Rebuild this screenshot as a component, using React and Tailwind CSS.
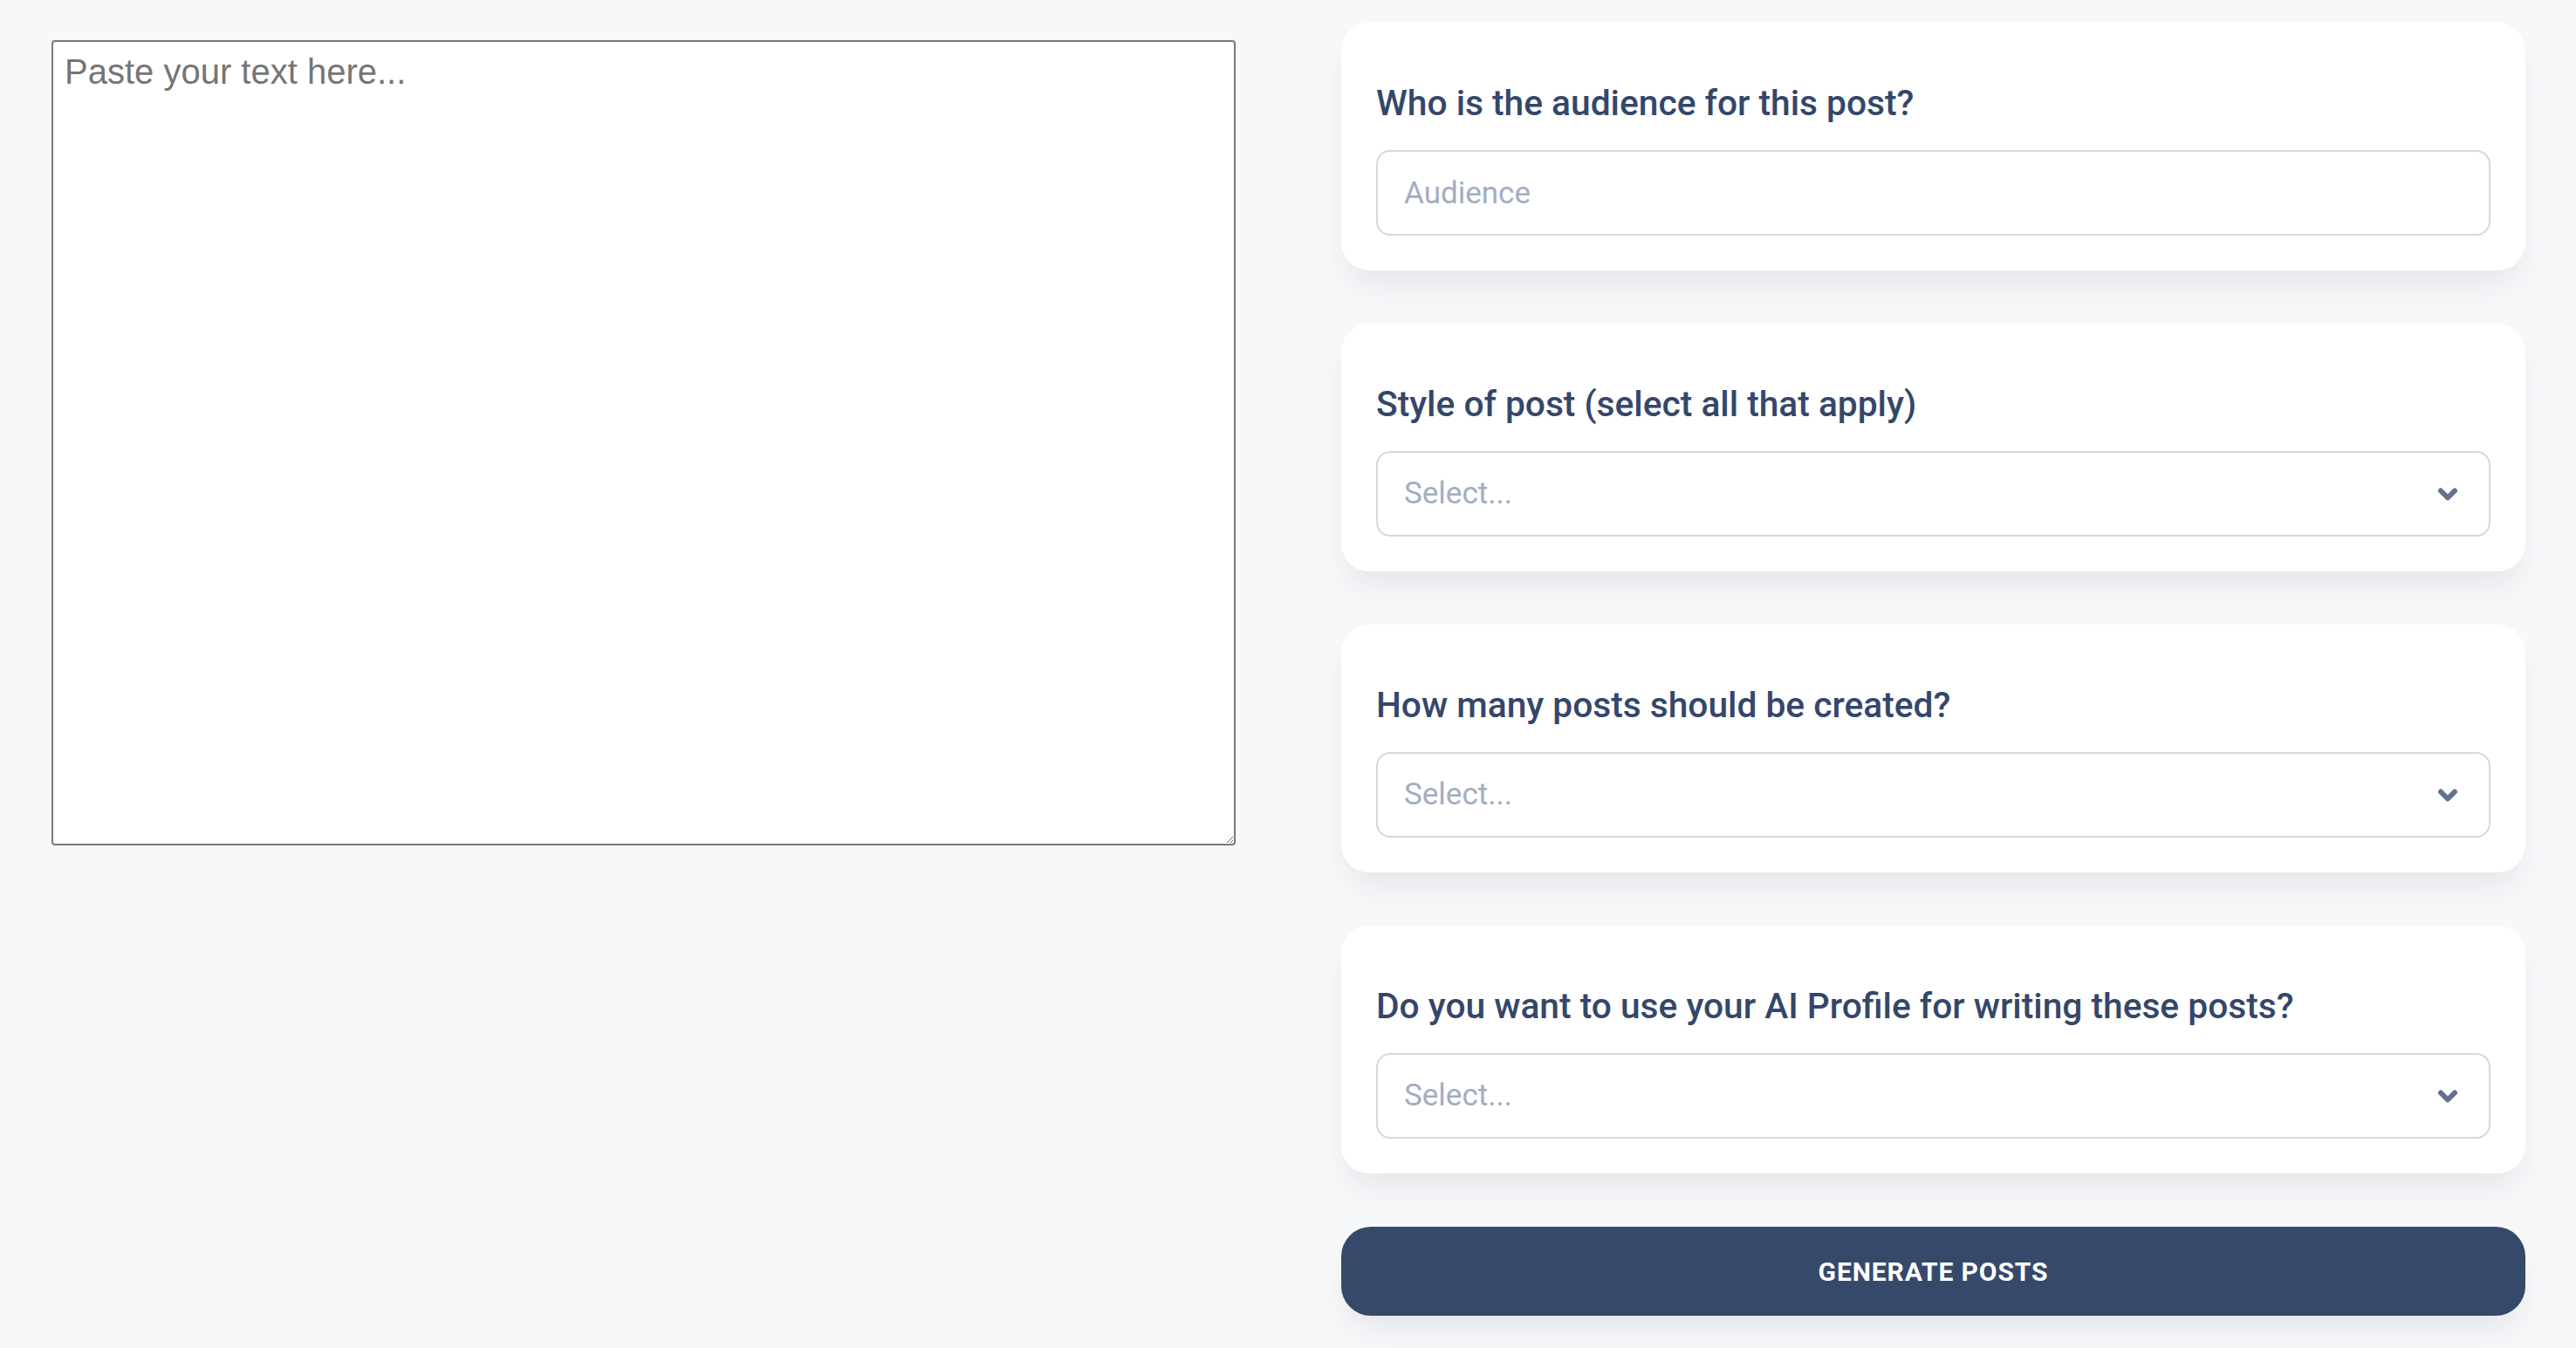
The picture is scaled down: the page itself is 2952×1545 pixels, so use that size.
const questions = [
  { label: "Who is the audience for this post?", kind: "text", placeholder: "Audience" },
  { label: "Style of post (select all that apply)", kind: "select" },
  { label: "How many posts should be created?", kind: "select" },
  { label: "Do you want to use your AI Profile for writing these posts?", kind: "select" },
];

const Chevron = () => (
  <svg width="24" height="17" viewBox="0 0 24 17" fill="none">
    <path
      d="M4 4.5 L12 12.5 L20 4.5"
      stroke="#64718c"
      strokeWidth="6"
      strokeLinecap="round"
      strokeLinejoin="round"
    />
  </svg>
);

const QuestionCard = ({ label, kind, placeholder }) => {
  return (
    <div className="rounded-[32px] bg-white px-[40px] pb-[40px] pt-[62px] shadow-[0_22px_34px_-8px_rgba(30,41,59,0.09)]">
      <h3 className="mb-[24px] text-[40.7px] font-medium leading-[60px] text-[#34476a]">
        {label}
      </h3>
      {kind === "text" ? (
        <input
          type="text"
          placeholder={placeholder}
          className="h-[98px] w-full rounded-[16px] border-2 border-[#d4d8de] bg-white px-[30px] text-[35px] text-[#34476a] outline-none placeholder:text-[#a3adbf]"
        />
      ) : (
        <div className="flex h-[98px] w-full items-center justify-between rounded-[16px] border-2 border-[#d4d8de] bg-white pl-[30px] pr-[35px]">
          <span className="text-[35px] text-[#a3adbf]">Select...</span>
          <Chevron />
        </div>
      )}
    </div>
  );
};

const App = () => {
  return (
    <div
      className="flex min-h-screen gap-[121px] bg-[#f7f8fa] pl-[59px] pr-[58px] pt-[26px]"
      style={{ fontFamily: "Roboto, 'Noto Sans', sans-serif" }}
    >
      {/* TEXT INPUT */}
      <div className="w-[1357px] shrink-0 pt-[20px]">
        <textarea
          placeholder="Paste your text here..."
          className="block h-[923px] w-full rounded-[4px] border-2 border-[#7a7a7a] bg-white px-[13px] pb-[14px] pt-[4px] text-[40px] text-gray-900 placeholder:text-[#757575]"
          style={{ fontFamily: "'Liberation Sans', Arial, sans-serif" }}
        />
      </div>

      {/* QUESTIONS */}
      <div className="flex w-[1357px] shrink-0 flex-col gap-[61px]">
        {questions.map((q) => (
          <QuestionCard key={q.label} {...q} />
        ))}
        <button
          type="button"
          className="h-[102px] w-full rounded-[34px] bg-[#36496a] text-[30px] font-bold uppercase tracking-[0.9px] text-white shadow-[0_22px_34px_-8px_rgba(30,41,59,0.09)]"
        >
          Generate Posts
        </button>
      </div>
    </div>
  );
};

export default App;
